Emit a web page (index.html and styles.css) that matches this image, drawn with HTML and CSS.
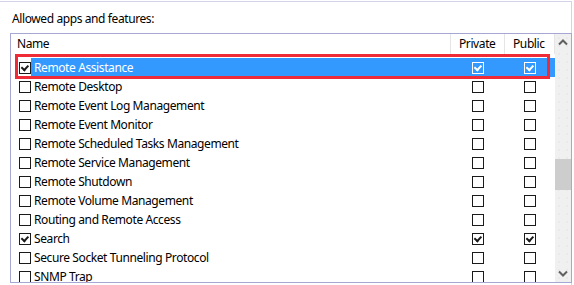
FILE: index.html
```html
<!DOCTYPE html>
<html lang="en">
<head>
    <meta charset="UTF-8">
    <title>Allowed apps and features</title>
    <link rel="stylesheet" href="styles.css">
</head>
<body>
    <div class="group">
        <div class="caption">Allowed apps and features:</div>

        <div class="list">
            <div class="table">
                <div class="row head">
                    <div class="cell name">Name</div>
                    <div class="cell">Private</div>
                    <div class="cell">Public</div>
                </div>

                <div class="rows">
                    <div class="row selected">
                        <div class="cell name"><span class="box on"></span><span class="label">Remote Assistance</span></div>
                        <div class="cell mid"><span class="box on"></span></div>
                        <div class="cell mid"><span class="box on"></span></div>
                    </div>
                    <div class="row">
                        <div class="cell name"><span class="box"></span><span class="label">Remote Desktop</span></div>
                        <div class="cell mid"><span class="box"></span></div>
                        <div class="cell mid"><span class="box"></span></div>
                    </div>
                    <div class="row">
                        <div class="cell name"><span class="box"></span><span class="label">Remote Event Log Management</span></div>
                        <div class="cell mid"><span class="box"></span></div>
                        <div class="cell mid"><span class="box"></span></div>
                    </div>
                    <div class="row">
                        <div class="cell name"><span class="box"></span><span class="label">Remote Event Monitor</span></div>
                        <div class="cell mid"><span class="box"></span></div>
                        <div class="cell mid"><span class="box"></span></div>
                    </div>
                    <div class="row">
                        <div class="cell name"><span class="box"></span><span class="label">Remote Scheduled Tasks Management</span></div>
                        <div class="cell mid"><span class="box"></span></div>
                        <div class="cell mid"><span class="box"></span></div>
                    </div>
                    <div class="row">
                        <div class="cell name"><span class="box"></span><span class="label">Remote Service Management</span></div>
                        <div class="cell mid"><span class="box"></span></div>
                        <div class="cell mid"><span class="box"></span></div>
                    </div>
                    <div class="row">
                        <div class="cell name"><span class="box"></span><span class="label">Remote Shutdown</span></div>
                        <div class="cell mid"><span class="box"></span></div>
                        <div class="cell mid"><span class="box"></span></div>
                    </div>
                    <div class="row">
                        <div class="cell name"><span class="box"></span><span class="label">Remote Volume Management</span></div>
                        <div class="cell mid"><span class="box"></span></div>
                        <div class="cell mid"><span class="box"></span></div>
                    </div>
                    <div class="row">
                        <div class="cell name"><span class="box"></span><span class="label">Routing and Remote Access</span></div>
                        <div class="cell mid"><span class="box"></span></div>
                        <div class="cell mid"><span class="box"></span></div>
                    </div>
                    <div class="row">
                        <div class="cell name"><span class="box on"></span><span class="label">Search</span></div>
                        <div class="cell mid"><span class="box on"></span></div>
                        <div class="cell mid"><span class="box on"></span></div>
                    </div>
                    <div class="row">
                        <div class="cell name"><span class="box"></span><span class="label">Secure Socket Tunneling Protocol</span></div>
                        <div class="cell mid"><span class="box"></span></div>
                        <div class="cell mid"><span class="box"></span></div>
                    </div>
                    <div class="row">
                        <div class="cell name"><span class="box"></span><span class="label">SNMP Trap</span></div>
                        <div class="cell mid"><span class="box"></span></div>
                        <div class="cell mid"><span class="box"></span></div>
                    </div>
                </div>

                <!-- annotation box drawn over the selected row -->
                <div class="marker"></div>
            </div>

            <div class="scrollbar">
                <svg class="arrow" width="16" height="17" viewBox="0 0 16 17">
                    <path d="M4 10.5 L8 6.5 L12 10.5" fill="none" stroke="#606060" stroke-width="2"/>
                </svg>
                <div class="track">
                    <div class="thumb"></div>
                </div>
                <svg class="arrow" width="16" height="17" viewBox="0 0 16 17">
                    <path d="M4 6.5 L8 10.5 L12 6.5" fill="none" stroke="#606060" stroke-width="2"/>
                </svg>
            </div>
        </div>
    </div>
</body>
</html>
```

FILE: styles.css
```css
body {
    margin: 0;
    background: #fff;
    color: #000;
    font-family: "Noto Sans", "Open Sans", sans-serif;
    font-size: 12px;
    letter-spacing: -0.4px;
    overflow: hidden;
}

.group {
    margin: 1px 0 0 -2px;
    width: 574px;
    height: 290px;
    border-top: 1px solid #d2d2e8;
    border-right: 1px solid #d2d2e8;
    box-sizing: border-box;
    padding: 9px 0 0 12px;
}

.caption {
    margin-left: 2px;
    height: 22px;
    line-height: 16px;
}

.list {
    display: flex;
    width: 562px;
    height: 250px;
    border: 1px solid #a7a7d4;
    box-sizing: border-box;
}

.table {
    position: relative;
    width: 544px;
    overflow: hidden;
}

.row {
    display: grid;
    grid-template-columns: 440px 54px 50px;
    height: 19px;
    align-items: center;
}

.head {
    height: 20px;
    margin-bottom: 4px;
}

.head .cell {
    height: 20px;
    line-height: 20px;
    padding-left: 8px;
    border-right: 1px solid #e5e5e5;
    box-sizing: border-box;
}

.head .cell.name {
    padding-left: 6px;
}

.cell {
    display: flex;
    align-items: center;
    height: 19px;
    white-space: nowrap;
}

.cell.name {
    padding-left: 8px;
}

.cell.mid {
    justify-content: center;
}

.label {
    margin-left: 3px;
    line-height: 19px;
}

.box {
    position: relative;
    width: 12px;
    height: 12px;
    border: 1px solid #1a1a1a;
    box-sizing: border-box;
    background: #fff;
    flex: none;
}

.box.on::after {
    content: "";
    position: absolute;
    left: 2px;
    top: 2px;
    width: 5px;
    height: 3px;
    border-left: 2px solid #1a1a1a;
    border-bottom: 2px solid #1a1a1a;
    transform: rotate(-48deg);
    transform-origin: 40% 60%;
}

.selected {
    background: linear-gradient(to right, transparent 20px, #3399ff 20px);
    color: #fff;
}

.selected .cell.mid .box {
    background: transparent;
    border-color: #fff;
}

.selected .cell.mid .box.on::after {
    border-color: #fff;
}

.marker {
    position: absolute;
    left: 4px;
    top: 20px;
    width: 535px;
    height: 25px;
    border: 3px solid #ee2b36;
    box-sizing: border-box;
    pointer-events: none;
}

.scrollbar {
    display: flex;
    flex-direction: column;
    width: 16px;
    background-color: #f0f0f0;
    background-image: radial-gradient(#e2e2e2 0.6px, transparent 0.8px);
    background-size: 8px 8px;
}

.arrow {
    display: block;
    flex: none;
}

.track {
    flex: 1;
    padding-top: 108px;
}

.thumb {
    height: 31px;
    background: #cdcdcd;
}
```
